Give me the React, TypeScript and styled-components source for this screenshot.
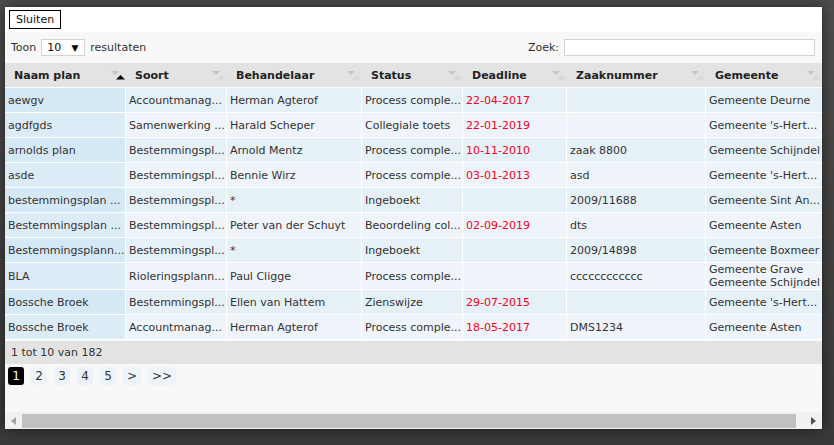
import styled, { createGlobalStyle } from "styled-components";

const GlobalStyle = createGlobalStyle`
  html, body {
    margin: 0;
    padding: 0;
    width: 834px;
    height: 445px;
    overflow: hidden;
    background: linear-gradient(#4f4d4b, #393939);
  }
  * {
    box-sizing: border-box;
  }
`;

const Page = styled.div`
  padding: 7px 12px 16px 5px;
  font-family: "DejaVu Sans", Verdana, sans-serif;
  font-size: 11px;
  color: #333;
`;

const Dialog = styled.div`
  width: 817px;
  height: 422px;
  display: flex;
  flex-direction: column;
  background: #f8f8f8;
  box-shadow: 0 0 12px rgba(0, 0, 0, 0.55);
`;

const TopBar = styled.div`
  height: 25px;
  display: flex;
  align-items: center;
  padding-left: 4px;
  background: #fff;
`;

const CloseButton = styled.button`
  height: 19px;
  padding: 0 6px;
  border: 1px solid #000;
  background: #fff;
  font: inherit;
  color: #111;
  cursor: pointer;
`;

const Body = styled.div`
  flex: 1;
  overflow: hidden;
  display: flex;
  flex-direction: column;
`;

const Toolbar = styled.div`
  height: 31px;
  display: flex;
  align-items: center;
  justify-content: space-between;
  padding: 0 7px 0 6px;
`;

const Control = styled.label`
  display: flex;
  align-items: center;
  gap: 5px;
  color: #333;
`;

const Select = styled.div`
  width: 44px;
  height: 17px;
  display: flex;
  align-items: center;
  justify-content: space-between;
  padding: 0 6px 0 5px;
  background: #fff;
  border: 1px solid #d3d3d3;
  color: #111;
`;

const Caret = styled.span`
  font-size: 9px;
  color: #000;
`;

const SearchInput = styled.input`
  width: 251px;
  height: 17px;
  border: 1px solid #d3d3d3;
  background: #fff;
  padding: 0 3px;
  font: inherit;
  outline: none;
`;

const Table = styled.table`
  width: 817px;
  table-layout: fixed;
  border-collapse: separate;
  border-spacing: 0;
`;

const Col = styled.col<{ $w: number }>`
  width: ${(p) => p.$w}px;
`;

const HeadCell = styled.th`
  height: 25px;
  padding: 0 1px 0 9px;
  background: #e3e3e3;
  border-bottom: 1px solid #fff;
  text-align: left;
  font-weight: bold;
  color: #222;
`;

const HeadInner = styled.div`
  display: flex;
  align-items: center;
  justify-content: space-between;
`;

const Row = styled.tr<{ $odd: boolean }>`
  td {
    background: ${(p) => (p.$odd ? "#e5f0f7" : "#eef4f9")};
  }
  td:first-child {
    background: ${(p) => (p.$odd ? "#d5e8f5" : "#dcecf7")};
  }
`;

const Cell = styled.td<{ $late?: boolean }>`
  height: 25px;
  padding: 0 3px;
  border-right: 1px solid #fff;
  border-bottom: 1px solid #fff;
  line-height: 13px;
  white-space: nowrap;
  overflow: hidden;
  color: ${(p) => (p.$late ? "#f20020" : "#333")};
  &:last-child {
    border-right: 0;
  }
`;

const Info = styled.div`
  height: 23px;
  display: flex;
  align-items: center;
  padding-left: 6px;
  margin-top: 1px;
  background: #e3e3e3;
`;

const Pagination = styled.div`
  display: flex;
  gap: 7px;
  padding: 3px 0 0 3px;
`;

const PageButton = styled.span<{ $current?: boolean }>`
  min-width: 16px;
  height: 18px;
  padding: 0 4px;
  display: flex;
  align-items: center;
  justify-content: center;
  border-radius: 3px;
  background: ${(p) => (p.$current ? "#000" : "#ecf4fa")};
  color: ${(p) => (p.$current ? "#fff" : "#333")};
  font-size: 12px;
`;

const ScrollBar = styled.div`
  height: 17px;
  display: flex;
  align-items: stretch;
  background: #f1f1f1;
`;

const ScrollArrow = styled.div<{ $dark?: boolean }>`
  width: 17px;
  display: flex;
  align-items: center;
  justify-content: center;
  color: ${(p) => (p.$dark ? "#505050" : "#a3a3a3")};
`;

const ScrollThumb = styled.div`
  flex: 1;
  margin: 2px 9px 1px 0;
  background: #c1c1c1;
`;

function SortIcon({ active }: { active?: boolean }) {
  return (
    <svg width="14" height="9" viewBox="0 0 14 9">
      <polygon points="0,0 8,0 4,4" fill="#c5c5c5" />
      <polygon points="5,8.5 14,8.5 9.5,4" fill={active ? "#000" : "#d7d7d7"} />
    </svg>
  );
}

function Arrow({ right }: { right?: boolean }) {
  return (
    <svg width="5" height="8" viewBox="0 0 5 8">
      <polygon points={right ? "0,0 5,4 0,8" : "5,0 0,4 5,8"} fill="currentColor" />
    </svg>
  );
}

const columns = [
  { title: "Naam plan", width: 121 },
  { title: "Soort", width: 101 },
  { title: "Behandelaar", width: 135 },
  { title: "Status", width: 101 },
  { title: "Deadline", width: 104 },
  { title: "Zaaknummer", width: 139 },
  { title: "Gemeente", width: 116 },
];

interface IPlan {
  name: string;
  kind: string;
  handler: string;
  status: string;
  deadline: string;
  caseNo: string;
  towns: string[];
}

const plans: IPlan[] = [
  { name: "aewgv", kind: "Accountmanag...", handler: "Herman Agterof", status: "Process comple...", deadline: "22-04-2017", caseNo: "", towns: ["Gemeente Deurne"] },
  { name: "agdfgds", kind: "Samenwerking ...", handler: "Harald Scheper", status: "Collegiale toets", deadline: "22-01-2019", caseNo: "", towns: ["Gemeente 's-Hert..."] },
  { name: "arnolds plan", kind: "Bestemmingspl...", handler: "Arnold Mentz", status: "Process comple...", deadline: "10-11-2010", caseNo: "zaak 8800", towns: ["Gemeente Schijndel"] },
  { name: "asde", kind: "Bestemmingspl...", handler: "Bennie Wirz", status: "Process comple...", deadline: "03-01-2013", caseNo: "asd", towns: ["Gemeente 's-Hert..."] },
  { name: "bestemmingsplan ...", kind: "Bestemmingspl...", handler: "*", status: "Ingeboekt", deadline: "", caseNo: "2009/11688", towns: ["Gemeente Sint An..."] },
  { name: "Bestemmingsplan ...", kind: "Bestemmingspl...", handler: "Peter van der Schuyt", status: "Beoordeling col...", deadline: "02-09-2019", caseNo: "dts", towns: ["Gemeente Asten"] },
  { name: "Bestemmingsplann...", kind: "Bestemmingspl...", handler: "*", status: "Ingeboekt", deadline: "", caseNo: "2009/14898", towns: ["Gemeente Boxmeer"] },
  { name: "BLA", kind: "Rioleringsplann...", handler: "Paul Cligge", status: "Process comple...", deadline: "", caseNo: "cccccccccccc", towns: ["Gemeente Grave", "Gemeente Schijndel"] },
  { name: "Bossche Broek", kind: "Bestemmingspl...", handler: "Ellen van Hattem", status: "Zienswijze", deadline: "29-07-2015", caseNo: "", towns: ["Gemeente 's-Hert..."] },
  { name: "Bossche Broek", kind: "Accountmanag...", handler: "Herman Agterof", status: "Process comple...", deadline: "18-05-2017", caseNo: "DMS1234", towns: ["Gemeente Asten"] },
];

const pages = ["1", "2", "3", "4", "5", ">", ">>"];

export default function App() {
  return (
    <>
      <GlobalStyle />
      <Page>
        <Dialog>
          <TopBar>
            <CloseButton>Sluiten</CloseButton>
          </TopBar>
          <Body>
            <Toolbar>
              <Control>
                Toon
                <Select>
                  10 <Caret>▼</Caret>
                </Select>
                resultaten
              </Control>
              <Control>
                Zoek:
                <SearchInput />
              </Control>
            </Toolbar>
            <Table>
              <colgroup>
                {columns.map((c) => (
                  <Col key={c.title} $w={c.width} />
                ))}
              </colgroup>
              <thead>
                <tr>
                  {columns.map((c, i) => (
                    <HeadCell key={c.title}>
                      <HeadInner>
                        {c.title}
                        <SortIcon active={i === 0} />
                      </HeadInner>
                    </HeadCell>
                  ))}
                </tr>
              </thead>
              <tbody>
                {plans.map((p, i) => (
                  <Row key={i} $odd={i % 2 === 0}>
                    <Cell>{p.name}</Cell>
                    <Cell>{p.kind}</Cell>
                    <Cell>{p.handler}</Cell>
                    <Cell>{p.status}</Cell>
                    <Cell $late>{p.deadline}</Cell>
                    <Cell>{p.caseNo}</Cell>
                    <Cell>
                      {p.towns.map((t, j) => (
                        <div key={j}>{t}</div>
                      ))}
                    </Cell>
                  </Row>
                ))}
              </tbody>
            </Table>
            <Info>1 tot 10 van 182</Info>
            <Pagination>
              {pages.map((p) => (
                <PageButton key={p} $current={p === "1"}>
                  {p}
                </PageButton>
              ))}
            </Pagination>
          </Body>
          <ScrollBar>
            <ScrollArrow>
              <Arrow />
            </ScrollArrow>
            <ScrollThumb />
            <ScrollArrow $dark>
              <Arrow right />
            </ScrollArrow>
          </ScrollBar>
        </Dialog>
      </Page>
    </>
  );
}
